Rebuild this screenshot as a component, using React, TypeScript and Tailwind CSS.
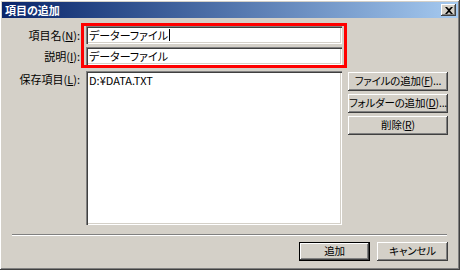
import React from "react";

const font = "[font-family:'Noto_Sans_CJK_JP','Noto_Sans',sans-serif] [font-feature-settings:'palt']";

function Btn({ children, w, isDefault }: { children: React.ReactNode; w: string; isDefault?: boolean }) {
  return (
    <div
      className={`${w} h-[19px] flex items-center justify-center whitespace-nowrap tracking-[-0.2px] bg-[#d4d0c8] text-[10.5px] leading-none text-black ${
        isDefault
          ? "border border-black shadow-[inset_-1px_-1px_#404040,inset_1px_1px_#ffffff,inset_-2px_-2px_#808080]"
          : "shadow-[inset_-1px_-1px_#404040,inset_1px_1px_#ffffff,inset_-2px_-2px_#808080]"
      }`}
    >
      {children}
    </div>
  );
}

function Field({ text, caret }: { text: string; caret?: boolean }) {
  return (
    <div className="w-[256px] h-[18px] bg-white shadow-[inset_1px_1px_#808080,inset_2px_2px_#404040,inset_-1px_-1px_#ffffff,inset_-2px_-2px_#d4d0c8] flex items-center pl-[3px] text-[11px] leading-none text-black">
      <span>{text}</span>
      {caret && <span className="w-px h-[12px] bg-black ml-[1px]" />}
    </div>
  );
}

export default function App() {
  return (
    <div className={`${font} w-[460px] h-[270px] bg-[#d4d0c8] p-[2px] shadow-[inset_-1px_-1px_#404040,inset_1px_1px_#ffffff,inset_-2px_-2px_#808080] flex flex-col`}>
      <div className="h-[16px] bg-gradient-to-r from-[#0a246a] to-[#a6caf0] flex items-center justify-between pl-[3px] pr-[2px]">
        <span className="text-white font-bold text-[11px] leading-none">項目の追加</span>
        <div className="w-[15px] h-[12px] bg-[#d4d0c8] shadow-[inset_-1px_-1px_#404040,inset_1px_1px_#ffffff,inset_-2px_-2px_#808080] flex items-center justify-center">
          <svg width="8" height="7" viewBox="0 0 8 7">
            <path d="M0 0h2l2 2 2-2h2L5 3.5 8 7H6L4 5 2 7H0l3-3.5z" fill="#000" />
          </svg>
        </div>
      </div>

      <div className="flex mt-[5px]">
        <div className="w-[79px] pt-[3px] flex flex-col gap-[3px] text-[11px] text-black">
          <div className="h-[18px] flex items-center justify-end pr-[1px]">項目名(<span className="underline">N</span>):</div>
          <div className="h-[18px] flex items-center justify-end pr-[1px]">説明(<span className="underline">I</span>):</div>
        </div>
        <div className="w-[266px] h-[45px] border-[3px] border-[#ff0000] px-[2px] flex flex-col gap-[3px]">
          <Field text="データーファイル" caret />
          <Field text="データーファイル" />
        </div>
      </div>

      <div className="flex mt-[3px]">
        <div className="w-[84px] pr-[6px] flex justify-end pt-[1px] text-[11px] leading-[14px] text-black">
          保存項目(<span className="underline">L</span>):
        </div>
        <div className="w-[256px] h-[154px] bg-white shadow-[inset_1px_1px_#808080,inset_2px_2px_#404040,inset_-1px_-1px_#ffffff,inset_-2px_-2px_#d4d0c8] pl-[3px] pt-[2px] text-[11px] leading-[14px] text-black">
          D:¥DATA.TXT
        </div>
        <div className="ml-[6px] mt-[1px] flex flex-col gap-[3px]">
          <Btn w="w-[100px]">ファイルの追加(<span className="underline">F</span>)...</Btn>
          <Btn w="w-[100px]">フォルダーの追加(<span className="underline">D</span>)...</Btn>
          <Btn w="w-[100px]">削除(<span className="underline">R</span>)</Btn>
        </div>
      </div>

      <div className="ml-[10px] mt-[9px] w-[435px] h-[2px] border-t border-[#808080] border-b border-b-white" />

      <div className="flex justify-end gap-[7px] pr-[10px] mt-[6px]">
        <Btn w="w-[71px]" isDefault>追加</Btn>
        <Btn w="w-[71px]">キャンセル</Btn>
      </div>
    </div>
  );
}
